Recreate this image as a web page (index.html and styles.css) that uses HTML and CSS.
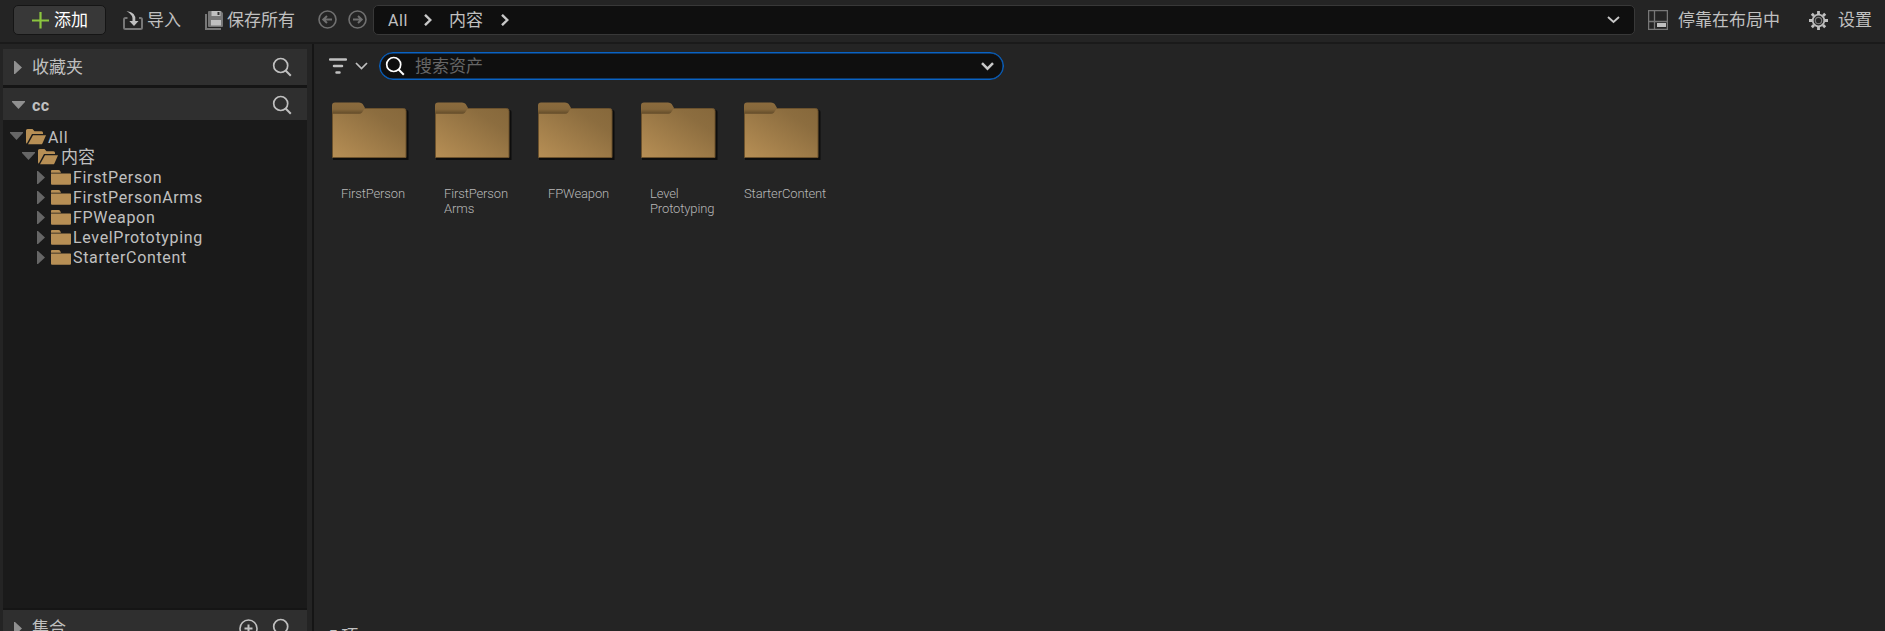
FILE: index.html
```html
<!DOCTYPE html>
<html lang="zh-CN">
<head>
<meta charset="utf-8">
<title>Content Browser</title>
<link rel="stylesheet" href="styles.css">
</head>
<body>
<svg class="defs" width="0" height="0">
  <defs>
    <linearGradient id="face" x1="0" y1="1" x2="1" y2="0">
      <stop offset="0" stop-color="#b78f55"/><stop offset="0.75" stop-color="#8c6d3f"/><stop offset="1" stop-color="#86683b"/>
    </linearGradient>
    <linearGradient id="tab" x1="0" y1="0" x2="0" y2="1">
      <stop offset="0" stop-color="#8b6b3d"/><stop offset="0.6" stop-color="#85673b"/><stop offset="1" stop-color="#624b29"/>
    </linearGradient>
    <symbol id="search" viewBox="0 0 20 20"><circle cx="8.7" cy="8.5" r="7" fill="none" stroke="currentColor" stroke-width="1.7"/><path d="M13.6 13.5 18.8 18.7" stroke="currentColor" stroke-width="2"/></symbol>
    <symbol id="right" viewBox="0 0 8 13"><path d="M0 0h1L8 6.5 1 13H0z" fill="currentColor"/></symbol>
    <symbol id="down" viewBox="0 0 13 8"><path d="M0 0h13v1L6.5 8 0 1z" fill="currentColor"/></symbol>
    <symbol id="folder" viewBox="0 0 20 15"><path d="M0 .8Q0 0 1 0h6.500q1 0 1.700 1l.8 1.700H0zM0 3.500h19.300q.7 0 .7.700v9.500q0 1-1 1H1q-1 0-1-1z" fill="#b78f55"/></symbol>
    <symbol id="open" viewBox="0 0 20 16"><path d="M0 1.500Q0 0 1.500 0h5l2 2.200h7q1.500 0 1.500 1.500v1.400H6L.8 14.500Q0 14.500 0 13z" fill="#b78f55"/><path d="M7 6.200h13l-3.600 8.200q-.4.900-1.400.9H2z" fill="#b78f55"/></symbol>
    <symbol id="big" viewBox="0 0 77 60">
      <path d="M1 8h73.500q2 0 2 2v48H1z" fill="#0d0d0d"/>
      <path d="M.5 6.500h71q2.500 0 2.500 2.500v46.500H.5z" fill="url(#face)" stroke="#6c522d" stroke-width="1"/>
      <path d="M0 3.500Q0 .5 3 .5h24q2.500 0 3.700 1.500L33 6l-2.800 4.200q-1.200 1.500-3 1.500H0z" fill="url(#tab)"/>
    </symbol>
  </defs>
</svg>
<div class="browser">
  <header class="toolbar">
    <button class="add"><svg width="17" height="17" viewBox="0 0 17 17"><path d="M8.500 0v16.500M0 8.500h17" stroke="#8bc53f" stroke-width="2.200"/></svg><span>添加</span></button>
    <div class="tool import">
      <svg width="20" height="19" viewBox="0 0 20 19"><path d="M4.500 7H2.500Q1 7 1 8.500v8Q1 18 2.500 18h15q1.500 0 1.500-1.500v-8Q19 7 17.500 7H16" fill="none" stroke="#777" stroke-width="2"/><path d="M3.500 0Q14 1.500 12.300 10h3.200L11 15 6.300 10h3.200Q10.500 4 3.500 0z" fill="#c0c0c0"/></svg><span>导入</span>
    </div>
    <div class="tool save">
      <svg width="19" height="19" viewBox="0 0 19 19"><path d="M1 3v15h15" fill="none" stroke="#777" stroke-width="2"/><path d="M3 1Q3 0 4 0h12l2 2v13q0 1-1 1H4q-1 0-1-1z" fill="#777"/><path d="M6.500 0h9v5h-9zM6 9h10v5.500H6z" fill="#c0c0c0"/><path d="M12.500 1h2v3h-2z" fill="#333"/></svg><span>保存所有</span>
    </div>
    <svg class="nav" width="19" height="19" viewBox="0 0 19 19"><g fill="none" stroke="#707070" stroke-width="1.600"><circle cx="9.500" cy="9.500" r="8.500"/><path d="M14 9.500H5M9 6 5.300 9.500 9 13" stroke-width="2"/></g></svg>
    <svg class="nav" width="19" height="19" viewBox="0 0 19 19"><g fill="none" stroke="#707070" stroke-width="1.600"><circle cx="9.500" cy="9.500" r="8.500"/><path d="M5 9.500h9M10 6l3.700 3.500L10 13" stroke-width="2"/></g></svg>
    <nav class="crumbs">
      <span class="crumb-all">All</span>
      <svg class="sep" width="8" height="12" viewBox="0 0 8 12"><path d="M1 .8 6.300 6 1 11.200" fill="none" stroke="#c8c8c8" stroke-width="2.400"/></svg>
      <span class="crumb-content">内容</span>
      <svg class="sep" width="8" height="12" viewBox="0 0 8 12"><path d="M1 .8 6.300 6 1 11.200" fill="none" stroke="#c8c8c8" stroke-width="2.400"/></svg>
      <svg class="history" width="13" height="8" viewBox="0 0 13 8"><path d="m1 1 5.500 5L12 1" fill="none" stroke="#c8c8c8" stroke-width="1.900"/></svg>
    </nav>
    <div class="tool dock">
      <svg width="20" height="20" viewBox="0 0 20 20"><path d="M.6.600h18.800v18.800H.6zM6.500 0v20M0 11.500h20" fill="none" stroke="#777" stroke-width="1.300"/><path d="M9 13h9v4H9z" fill="#c0c0c0"/></svg><span>停靠在布局中</span>
    </div>
    <div class="tool settings">
      <svg width="19" height="19" viewBox="-9.500 -9.500 19 19"><g stroke="#c0c0c0" stroke-width="2.800"><path d="M0-9.500v3M0 9.500v-3M-9.500 0h3M9.500 0h-3M-6.700-6.700l2.200 2.200M6.700-6.700 4.500-4.500M-6.700 6.700l2.200-2.200M6.700 6.700 4.500 4.500"/></g><circle r="5.800" fill="none" stroke="#c0c0c0" stroke-width="1.800"/><circle r="3.200" fill="none" stroke="#777" stroke-width="1.300"/></svg><span>设置</span>
    </div>
  </header>
  <div class="body">
    <aside class="sources">
      <section class="head favorites"><svg class="arrow" width="8" height="13"><use href="#right"/></svg><span>收藏夹</span><svg class="find" width="20" height="20"><use href="#search"/></svg></section>
      <section class="head project"><svg class="arrow wide" width="13" height="8"><use href="#down"/></svg><b>cc</b><svg class="find" width="20" height="20"><use href="#search"/></svg></section>
      <ul class="tree">
        <li class="root"><svg class="caret" width="13" height="8"><use href="#down"/></svg><svg class="icon" width="20" height="16"><use href="#open"/></svg><span>All</span></li>
        <li class="content"><svg class="caret" width="13" height="8"><use href="#down"/></svg><svg class="icon" width="20" height="16"><use href="#open"/></svg><span>内容</span></li>
        <li><svg class="caret" width="8" height="13"><use href="#right"/></svg><svg class="icon" width="20" height="15"><use href="#folder"/></svg><span>FirstPerson</span></li>
        <li><svg class="caret" width="8" height="13"><use href="#right"/></svg><svg class="icon" width="20" height="15"><use href="#folder"/></svg><span>FirstPersonArms</span></li>
        <li><svg class="caret" width="8" height="13"><use href="#right"/></svg><svg class="icon" width="20" height="15"><use href="#folder"/></svg><span>FPWeapon</span></li>
        <li><svg class="caret" width="8" height="13"><use href="#right"/></svg><svg class="icon" width="20" height="15"><use href="#folder"/></svg><span>LevelPrototyping</span></li>
        <li><svg class="caret" width="8" height="13"><use href="#right"/></svg><svg class="icon" width="20" height="15"><use href="#folder"/></svg><span>StarterContent</span></li>
      </ul>
      <section class="head collections"><svg class="arrow" width="8" height="13"><use href="#right"/></svg><span>集合</span><svg class="plus" width="19" height="19" viewBox="0 0 19 19"><g fill="none" stroke="#c0c0c0" stroke-width="1.600"><circle cx="9.500" cy="9.500" r="8.500"/><path d="M9.500 5.500v8M5.500 9.500h8" stroke-width="2"/></g></svg><svg class="find" width="20" height="20"><use href="#search"/></svg></section>
    </aside>
    <main class="assets">
      <div class="filterbar">
        <svg class="filter" width="18" height="16" viewBox="0 0 18 16"><path d="M1 1.500h16M5 8h8M7.500 14.500h3" stroke="#c0c0c0" stroke-width="2.500" stroke-linecap="round"/></svg>
        <svg class="chev" width="13" height="8" viewBox="0 0 13 8"><path d="m1 1 5.500 5.500L12 1" fill="none" stroke="#c0c0c0" stroke-width="1.700"/></svg>
        <div class="search"><svg width="20" height="20"><use href="#search"/></svg><span>搜索资产</span><svg class="more" width="13" height="9" viewBox="0 0 13 9"><path d="m1 1.200 5.500 5.500L12 1.200" fill="none" stroke="#c8c8c8" stroke-width="2.500"/></svg></div>
      </div>
      <div class="grid">
        <div class="tile"><svg width="77" height="60"><use href="#big"/></svg><p>FirstPerson</p></div>
        <div class="tile"><svg width="77" height="60"><use href="#big"/></svg><p>FirstPerson<br>Arms</p></div>
        <div class="tile"><svg width="77" height="60"><use href="#big"/></svg><p class="weapon">FPWeapon</p></div>
        <div class="tile"><svg width="77" height="60"><use href="#big"/></svg><p>Level<br>Prototyping</p></div>
        <div class="tile"><svg width="77" height="60"><use href="#big"/></svg><p class="starter">StarterContent</p></div>
      </div>
      <footer class="status">5 项</footer>
    </main>
  </div>
</div>
</body>
</html>
```
FILE: styles.css
```css
* { box-sizing: border-box; }
body { margin: 0; background: #242424; color: #c0c0c0; font: 17px/20px Roboto, "Noto Sans CJK SC", sans-serif; overflow: hidden; }
svg { display: block; flex: none; }
.defs { position: absolute; }
.browser { width: 1885px; height: 631px; display: flex; flex-direction: column; overflow: hidden; }
.toolbar { height: 44px; flex: none; display: flex; align-items: flex-start; padding-top: 5px; border-bottom: 2px solid #1a1a1a; white-space: nowrap; }
.add { margin: 0 0 0 13px; width: 93px; height: 30px; display: flex; align-items: center; gap: 5px; padding: 0 0 0 18px; border: 1px solid #151515; border-radius: 5px; background: #383838; color: #fff; font: inherit; }
.tool { height: 30px; display: flex; align-items: center; }
.import { width: 82px; margin-left: 17px; gap: 4px; }
.save { width: 113px; gap: 3px; }
.nav { margin: 5px 11px 0 0; }
.crumbs { width: 1262px; height: 30px; margin-left: -5px; display: flex; align-items: center; border: 1px solid #383838; border-radius: 5px; background: #0f0f0f; padding: 0 14px; }
.crumb-all { width: 36px; padding-top: 1px; font-size: 16px; letter-spacing: .6px; }
.crumb-content { margin: 0 18px 0 17px; }
.history { margin-left: auto; }
.dock { margin-left: 13px; gap: 10px; width: 161px; }
.settings { gap: 10px; }
.body { flex: 1; min-height: 0; display: flex; }
.sources { width: 314px; flex: none; padding: 5px 5px 0 3px; border-right: 2px solid #151515; display: flex; flex-direction: column; }
.head { width: 304px; display: flex; align-items: center; background: #2f2f2f; padding: 0 15px 0 11px; flex: none; }
.arrow { color: #909090; margin-right: 10px; }
.wide { margin: 0 7px 0 -2px; }
.find { margin-left: auto; }
.favorites { height: 39px; border-bottom: 3px solid #151515; }
.project { height: 32px; padding-top: 2px; }
.project b { padding-top: 1px; font-size: 16px; letter-spacing: .3px; }
.tree { list-style: none; margin: 0; width: 304px; height: 490px; flex: none; padding: 7px 0 0 34px; background: #1a1a1a; border-bottom: 2px solid #151515; }
.tree li { height: 20px; display: flex; align-items: center; font-size: 16px; letter-spacing: .67px; }
.tree span { padding-top: 1px; }
.tree .content span { padding-top: 0; }
.tree .caret { color: #666; margin-right: 6px; }
.tree .icon { margin-right: 2px; }
.tree .root { margin-left: -27px; }
.tree .content { margin-left: -15px; letter-spacing: 0; font-size: 17px; }
.tree .content .icon { margin-right: 3px; }
.tree .root .caret, .tree .content .caret { margin-right: 3px; margin-bottom: 3px; }
.collections { height: 36px; }
.plus { margin-left: auto; }
.plus + .find { margin-left: 14px; }
.assets { flex: 1; display: flex; flex-direction: column; padding-left: 15px; }
.filterbar { height: 44px; flex: none; display: flex; align-items: center; }
.chev { margin: 0 11px 0 8px; }
.search { width: 625px; height: 28px; display: flex; align-items: center; background: #0f0f0f; border: 1px solid #0a63c4; box-shadow: inset 0 0 0 .5px #0a63c4; border-radius: 14px; padding: 0 9px 0 5px; color: #fff; }
.search span { color: #666; margin-left: 10px; }
.more { margin-left: auto; }
.grid { display: flex; padding: 14px 0 0 3px; height: 538px; flex: none; }
.tile { width: 103px; }
.tile p { margin: 24px 0 0 9px; font-size: 13px; font-weight: 300; line-height: 15px; letter-spacing: -.13px; white-space: nowrap; color: #b8b8b8; }
.tile .weapon { margin-left: 10px; }
.tile .starter { margin-left: 0; }
.status { height: 20px; flex: none; margin-left: -1px; letter-spacing: -.3px; }
```
